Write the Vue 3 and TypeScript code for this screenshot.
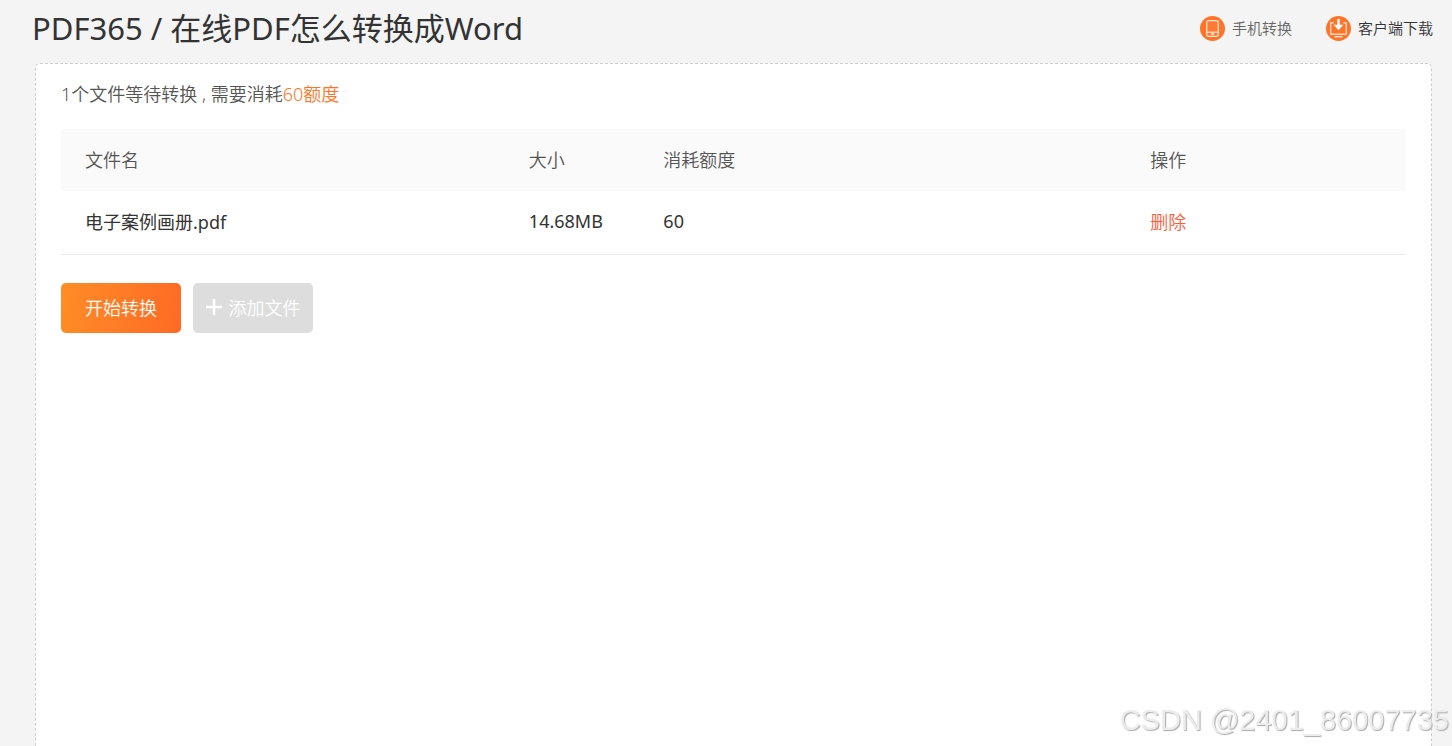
<script setup lang="ts">
interface QueuedFile {
  name: string
  size: string
  cost: number
}

const files: QueuedFile[] = [{ name: '电子案例画册.pdf', size: '14.68MB', cost: 60 }]
const total = files.reduce((sum, file) => sum + file.cost, 0)
</script>

<template>
  <div class="page">
    <header class="top">
      <h1 class="title">PDF365 / 在线PDF怎么转换成Word</h1>
      <nav class="links">
        <a class="link" href="#mobile">
          <svg class="badge" viewBox="0 0 25 25" aria-hidden="true">
            <circle cx="12.5" cy="12.5" r="12.5" fill="#ff7428" />
            <rect x="6.7" y="4.7" width="11.6" height="15.6" rx="1.6" fill="#ff7a33" stroke="#ffe4d4" stroke-width="1.3" />
            <path d="M7 16.2H18" stroke="#ffe4d4" stroke-width="1.2" />
            <rect x="11.3" y="17.3" width="2.4" height="1.8" rx=".6" fill="#fff" />
          </svg>
          <span>手机转换</span>
        </a>
        <a class="link link-dark" href="#client">
          <svg class="badge" viewBox="0 0 25 25" aria-hidden="true">
            <circle cx="12.5" cy="12.5" r="12.5" fill="#ff7428" />
            <path d="M7.8 6.7H4.7V18.3H20.3V6.7H17.2" fill="none" stroke="#ffd8c2" stroke-width="1.4" />
            <path d="M11.3 3H13.7V8.8H17.4L12.5 14.2L7.6 8.8H11.3Z" fill="#fff" />
            <path d="M8.5 20.7H16.5" stroke="#ffe9dd" stroke-width="1.3" />
          </svg>
          <span>客户端下载</span>
        </a>
      </nav>
    </header>

    <main class="card">
      <p class="summary">{{ files.length }}个文件等待转换 , 需要消耗<span class="amount">{{ total }}额度</span></p>
      <table class="files">
        <thead>
          <tr>
            <th class="col-name" scope="col">文件名</th>
            <th class="col-size" scope="col">大小</th>
            <th class="col-cost" scope="col">消耗额度</th>
            <th scope="col">操作</th>
          </tr>
        </thead>
        <tbody>
          <tr v-for="file in files" :key="file.name">
            <td>{{ file.name }}</td>
            <td>{{ file.size }}</td>
            <td>{{ file.cost }}</td>
            <td><button class="remove" type="button">删除</button></td>
          </tr>
        </tbody>
      </table>
      <div class="actions">
        <button class="btn start" type="button">开始转换</button>
        <button class="btn add" type="button">
          <svg class="plus" viewBox="0 0 16 16" aria-hidden="true">
            <path d="M8 0V16M0 8H16" stroke="#fff" stroke-width="2.6" />
          </svg>
          <span>添加文件</span>
        </button>
      </div>
    </main>

    <div class="watermark">CSDN @2401_86007735</div>
  </div>
</template>

<style>
body {
  background: #f4f4f4;
}
</style>

<style scoped>
.page {
  box-sizing: border-box;
  display: flex;
  flex-direction: column;
  min-height: 100vh;
  padding: 0 20px 0 35px;
  background: #f4f4f4;
  color: #333;
  font-family: "Noto Sans", "Noto Sans CJK SC", sans-serif;
  font-size: 18px;
  font-weight: 350;
}
.top {
  display: flex;
  justify-content: space-between;
  align-items: center;
  height: 56px;
  margin: 0 -1px 7px -3px;
}
.title {
  margin: 0;
  font-size: 31px;
  line-height: 56px;
  font-weight: 400;
  white-space: nowrap;
}
.links {
  display: flex;
  gap: 34px;
}
.link {
  display: flex;
  align-items: center;
  gap: 7px;
  color: #666;
  font-size: 15px;
  line-height: 25px;
  text-decoration: none;
  white-space: nowrap;
}
.link-dark {
  color: #333;
}
.badge {
  width: 25px;
  height: 25px;
}
.card {
  flex: 1;
  padding: 14px 25px 0;
  border: 1px dashed #ccc;
  border-bottom: 0;
  border-radius: 5px 5px 0 0;
  background: #fff;
}
.summary {
  margin: 0 0 19px;
  color: #555;
  line-height: 32px;
}
.amount {
  color: #ff7428;
}
.files {
  width: 100%;
  border-collapse: separate;
  border-spacing: 0;
  table-layout: fixed;
}
.files th,
.files td {
  box-sizing: border-box;
  padding: 0 24px 2px;
  font-weight: 350;
  text-align: left;
}
.files th {
  height: 62px;
  background: #fafafa;
  color: #555;
}
.files td {
  height: 64px;
  padding-bottom: 3px;
  border-bottom: 1px solid #ebebeb;
  font-weight: 400;
}
.col-name {
  width: 33%;
}
.col-size {
  width: 10%;
}
.col-cost {
  width: 36.2%;
}
button {
  border: 0;
  font: inherit;
  cursor: pointer;
}
.remove {
  padding: 0;
  background: none;
  color: #ff5b3a;
  font-weight: 350;
}
.actions {
  display: flex;
  gap: 12px;
  margin-top: 28px;
}
.btn {
  display: flex;
  align-items: center;
  justify-content: center;
  gap: 7px;
  width: 120px;
  height: 50px;
  padding: 0 0 2px;
  border-radius: 5px;
  color: #fff;
  white-space: nowrap;
}
.start {
  background: linear-gradient(100deg, #ff8d26, #ff6a25);
}
.add {
  background: #ddd;
}
.plus {
  width: 16px;
  height: 16px;
}
.watermark {
  position: fixed;
  right: 3px;
  bottom: 8px;
  color: #ececec;
  font-family: "Liberation Sans", Arial, sans-serif;
  font-size: 29px;
  line-height: 36px;
  text-shadow: 1px 1px 1px #aaa;
  pointer-events: none;
}
</style>
